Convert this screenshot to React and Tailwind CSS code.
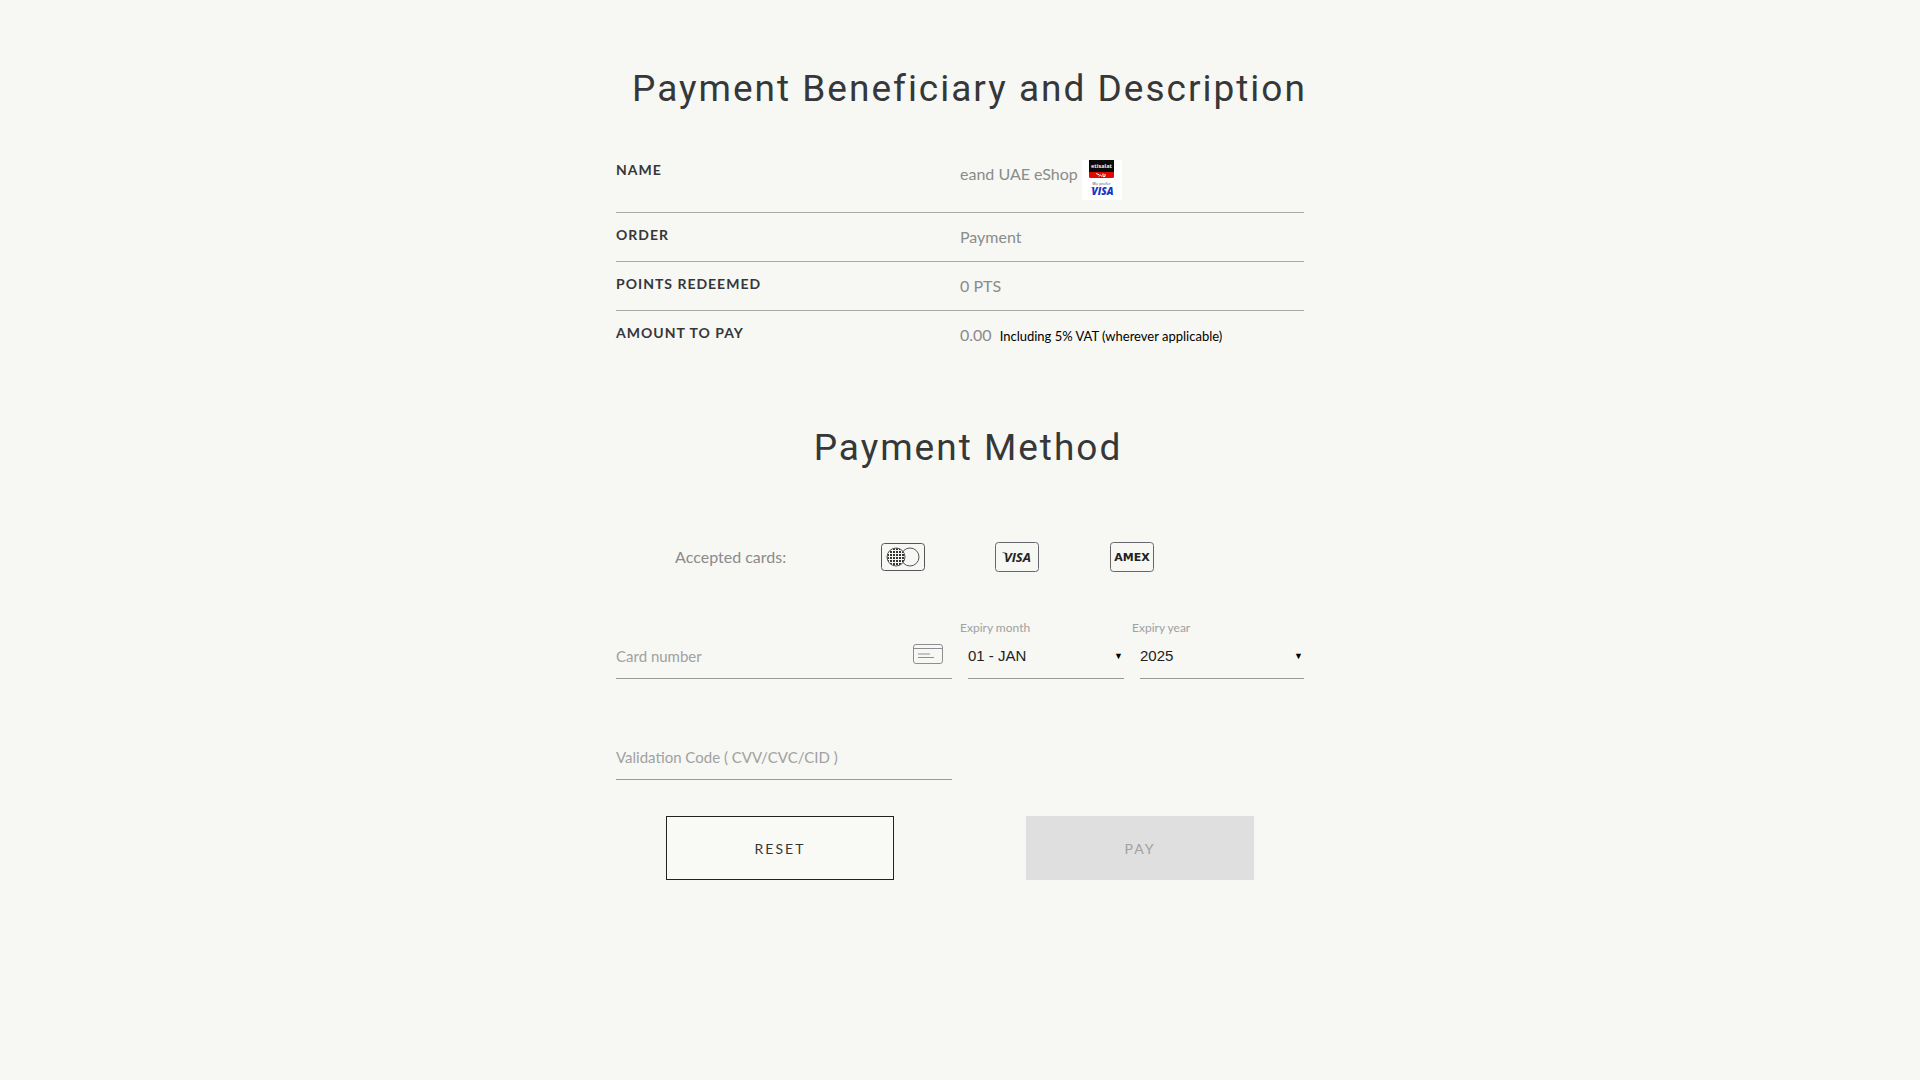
import React, { useState } from 'react';

const MONTHS = ['JAN', 'FEB', 'MAR', 'APR', 'MAY', 'JUN', 'JUL', 'AUG', 'SEP', 'OCT', 'NOV', 'DEC'];
const YEARS = [2025, 2026, 2027, 2028, 2029, 2030, 2031, 2032, 2033, 2034, 2035];

const MastercardIcon = () => (
  <svg width="44" height="30" viewBox="0 0 44 30" fill="none" stroke="#55565a" role="img" aria-label="Mastercard">
    <defs>
      <pattern id="dots" width="3" height="3" patternUnits="userSpaceOnUse">
        <rect x="0" y="0" width="2" height="2" fill="#333436" stroke="none" />
      </pattern>
    </defs>
    <rect x="0.5" y="1.5" width="43" height="27" rx="3" />
    <circle cx="29" cy="15" r="9" />
    <circle cx="15" cy="15" r="9" fill="#f7f7f3" stroke="none" />
    <circle cx="15" cy="15" r="9" fill="url(#dots)" />
  </svg>
);

const VisaIcon = () => (
  <svg width="44" height="30" viewBox="0 0 44 30" fill="none" role="img" aria-label="Visa">
    <rect x="0.5" y="0.5" width="43" height="29" rx="3" stroke="#66676a" />
    <path d="M6.5 10.5h4l1.5 3c-1.2-1.6-3-2.5-5.5-3z" fill="#222" />
    <text x="22.5" y="20" textAnchor="middle" fontSize="13" fontWeight="700" fontStyle="italic" fontFamily="Open Sans" fill="#222">VISA</text>
  </svg>
);

const AmexIcon = () => (
  <svg width="44" height="30" viewBox="0 0 44 30" fill="none" role="img" aria-label="American Express">
    <rect x="0.5" y="0.5" width="43" height="29" rx="3" stroke="#66676a" />
    <text x="22" y="19" textAnchor="middle" fontSize="11" fontWeight="700" fontFamily="DejaVu Sans" fill="#222">AMEX</text>
  </svg>
);

const CardIcon = () => (
  <svg width="30" height="20" viewBox="0 0 30 20" fill="none" stroke="#8d8e90" aria-hidden="true">
    <rect x="0.5" y="0.5" width="29" height="19" rx="2.5" />
    <path d="M0.5 4.5h29M5 13.5h16" />
    <path d="M5 10h12" stroke="#c4c4c2" strokeWidth="2" />
  </svg>
);

const MerchantLogo = () => (
  <svg width="40" height="40" viewBox="0 0 40 40" role="img" aria-label="etisalat, we prefer Visa">
    <rect width="40" height="40" fill="#fff" />
    <path d="M7 0h25v12H7z" fill="#0a0a0a" />
    <path d="M7 12h25v4.500a1.500 1.500 0 0 1-1.500 1.500h-22a1.500 1.500 0 0 1-1.500-1.500z" fill="#e00800" />
    <text x="19.500" y="8" textAnchor="middle" fontSize="5.500" fontWeight="700" fontFamily="Open Sans" fill="#eee">etisalat</text>
    <path d="M14 13.500l3 1.200M17 16.500c0-2 2.500-2 2.500 0M21 13.500v3M23 14v2.500h-2" stroke="#fff" strokeWidth="1" fill="none" />
    <text x="19.500" y="25" textAnchor="middle" fontSize="4" fontFamily="Open Sans" fill="#444">We prefer</text>
    <path d="M8 27.500h3l1 2c-1-1.200-2-1.700-4-2z" fill="#1a34c4" />
    <text x="20.500" y="35" textAnchor="middle" fontSize="10" fontWeight="800" fontStyle="italic" fontFamily="Open Sans" fill="#1a34c4">VISA</text>
  </svg>
);

const SectionTitle = ({ children }) => (
  <h2 className="pl-4 text-center font-['Roboto',sans-serif] text-[37px] leading-[48px] tracking-[2px] text-[#363739] md:whitespace-nowrap">
    {children}
  </h2>
);

const Row = ({ label, last, children }) => (
  <tr className={last ? 'align-top' : 'align-top border-b border-[#a9abab]'}>
    <th scope="row" className="w-1/2 py-3 text-left text-[14px] leading-5 font-bold tracking-[1px] text-[#363739] uppercase">
      {label}
    </th>
    <td className="w-1/2 py-3 text-base leading-6 text-[#8a8b8d]">{children}</td>
  </tr>
);

const SelectField = ({ id, label, value, onChange, className, children }) => (
  <div>
    <label htmlFor={id} className="block text-[12px] leading-4 text-[#a0a1a1]">{label}</label>
    <div className={`relative ml-2 ${className}`}>
      <select
        id={id}
        value={value}
        onChange={(e) => onChange(e.target.value)}
        className="block h-[43px] w-full appearance-none rounded-none border-b border-[#97999b] bg-transparent pr-5 pb-0.5 font-['Liberation_Sans',sans-serif] text-[15px] leading-5 text-[#222] outline-none"
      >
        {children}
      </select>
      <span aria-hidden="true" className="pointer-events-none absolute top-2.5 right-px text-[9px] leading-5 text-black">▼</span>
    </div>
  </div>
);

const App = () => {
  const [cardNumber, setCardNumber] = useState('');
  const [cvv, setCvv] = useState('');
  const [month, setMonth] = useState('01');
  const [year, setYear] = useState('2025');

  const canPay = cardNumber.length > 0 && cvv.length > 0;

  const handleReset = () => {
    setCardNumber('');
    setCvv('');
    setMonth('01');
    setYear('2025');
  };

  return (
    <main className="min-h-screen bg-[#f7f7f3] pt-[65px] pb-16 font-['Lato',sans-serif]">
      <div className="mx-auto w-full max-w-[688px]">
        <SectionTitle>Payment Beneficiary and Description</SectionTitle>

        <table className="mt-[35px] w-full table-fixed border-collapse">
          <tbody>
            <Row label="Name">
              <div className="flex items-start gap-1 leading-7">
                eand UAE eShop
                <MerchantLogo />
              </div>
            </Row>
            <Row label="Order">Payment</Row>
            <Row label="Points redeemed">0 PTS</Row>
            <Row label="Amount to pay" last>
              0.00
              <span className="ml-2 text-[13px] text-black">Including 5% VAT (wherever applicable)</span>
            </Row>
          </tbody>
        </table>

        <div className="mt-16">
          <SectionTitle>Payment Method</SectionTitle>
        </div>

        {/* Accepted cards */}
        <div className="mt-[70px] grid grid-cols-6 items-center justify-items-center">
          <span className="col-span-2 text-base text-[#8a8b8d]">Accepted cards:</span>
          <MastercardIcon />
          <VisaIcon />
          <AmexIcon />
        </div>

        <form onSubmit={(e) => e.preventDefault()}>
          <div className="mt-12 grid grid-cols-4 items-end">
            <div className="col-span-2 mr-2 flex items-start border-b border-[#97999b]">
              <input
                id="card-number"
                type="text"
                aria-label="Card number"
                placeholder="Card number"
                value={cardNumber}
                onChange={(e) => setCardNumber(e.target.value)}
                className="h-[42px] min-w-0 flex-1 bg-transparent pb-0.5 text-[15px] text-[#222] outline-none placeholder:text-[#a0a1a1]"
              />
              <div className="mt-2 mr-[9px]">
                <CardIcon />
              </div>
            </div>
            <SelectField id="month" label="Expiry month" value={month} onChange={setMonth} className="mr-2">
              {MONTHS.map((name, i) => {
                const num = String(i + 1).padStart(2, '0');
                return <option key={name} value={num}>{num} - {name}</option>;
              })}
            </SelectField>
            <SelectField id="year" label="Expiry year" value={year} onChange={setYear} className="mr-0">
              {YEARS.map((y) => <option key={y} value={y}>{y}</option>)}
            </SelectField>
          </div>

          <div className="mt-[58px] grid grid-cols-2">
            <input
              id="cvv"
              type="text"
              aria-label="Validation Code"
              placeholder="Validation Code ( CVV/CVC/CID )"
              value={cvv}
              onChange={(e) => setCvv(e.target.value)}
              className="mr-2 h-[43px] border-b border-[#97999b] bg-transparent pb-0.5 text-[15px] text-[#222] outline-none placeholder:text-[#a0a1a1]"
            />
          </div>

          <div className="-mx-4 mt-9 grid grid-cols-2 justify-items-center">
            <button
              type="button"
              onClick={handleReset}
              className="h-16 w-[228px] border border-[#222] bg-[#f9faf5] text-[14px] tracking-[2px] text-[#363739] uppercase"
            >
              Reset
            </button>
            <button
              type="submit"
              disabled={!canPay}
              className="h-16 w-[228px] bg-[#dfdfdf] text-[14px] tracking-[2px] text-[#a0a1a1] uppercase"
            >
              Pay
            </button>
          </div>
        </form>
      </div>
    </main>
  );
};

export default App;
